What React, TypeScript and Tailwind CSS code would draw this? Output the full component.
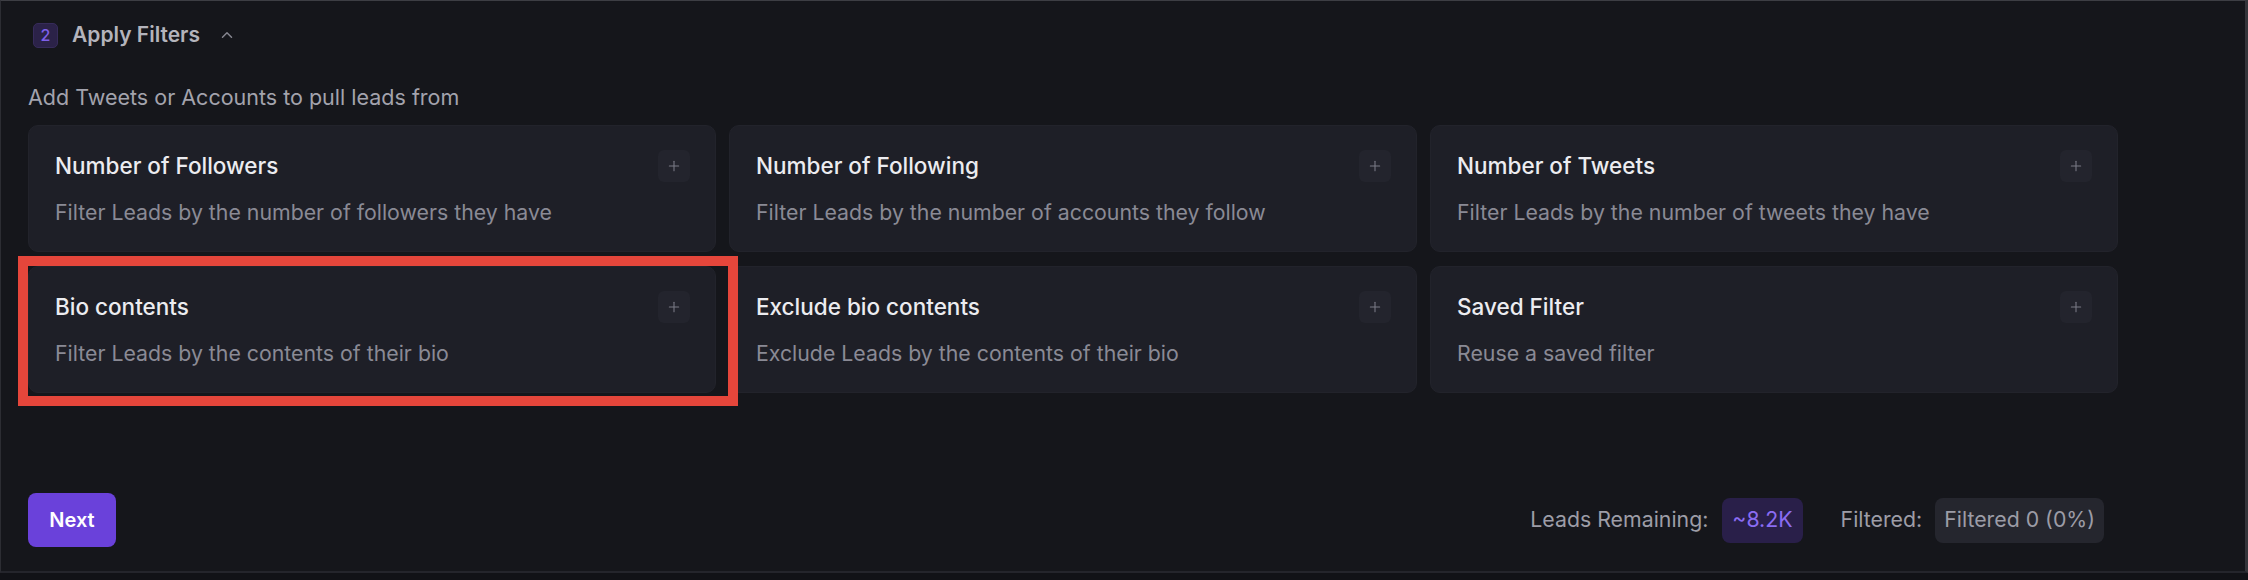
import { ChevronUp, Plus } from 'lucide-react';

const FILTERS = [
  { title: 'Number of Followers', desc: 'Filter Leads by the number of followers they have' },
  { title: 'Number of Following', desc: 'Filter Leads by the number of accounts they follow' },
  { title: 'Number of Tweets', desc: 'Filter Leads by the number of tweets they have' },
  { title: 'Bio contents', desc: 'Filter Leads by the contents of their bio' },
  { title: 'Exclude bio contents', desc: 'Exclude Leads by the contents of their bio' },
  { title: 'Saved Filter', desc: 'Reuse a saved filter' },
];

function FilterCard({ title, desc }: { title: string; desc: string }) {
  return (
    <div className="h-[127px] rounded-[10px] bg-[#1e1f27] border border-[#22232b] pl-[26px] pr-[25px] pt-[24px]">
      <div className="flex items-center justify-between">
        <h3 className="text-[22.5px] leading-[28px] font-medium text-[#ececf0]">{title}</h3>
        <button className="w-[32px] h-[32px] rounded-md bg-[#23242d] flex items-center justify-center text-[#7a7a86]">
          <Plus size={16} strokeWidth={1.6} />
        </button>
      </div>
      <p className="mt-[16px] text-[21.3px] leading-[28px] text-[#8a8a95]">{desc}</p>
    </div>
  );
}

export default function App() {
  return (
    <div className="w-[2248px] h-[580px] bg-[#111217] font-['Inter',sans-serif]">
      <div className="h-[573px] bg-[#15161b] border-t border-l border-r-[3px] border-b-2 border-t-[#3d3e44] border-l-[#2c2d33] border-r-[#34353b] border-b-[#24252c] flex flex-col">
        {/* header */}
        <div className="flex items-center gap-[14px] pl-[32px] pt-[20px]">
          <span className="w-[25px] h-[25px] rounded-[5px] bg-[#2b2248] border border-[#362b5a] flex items-center justify-center text-[16px] font-medium text-[#7f60ea]">
            2
          </span>
          <span className="text-[21px] leading-[28px] font-semibold text-[#b4b4bc]">Apply Filters</span>
          <ChevronUp size={18} strokeWidth={2} className="text-[#85858f] ml-[4px]" />
        </div>

        <p className="pl-[27px] mt-[34px] text-[21.5px] leading-[28px] text-[#a3a3ad]">
          Add Tweets or Accounts to pull leads from
        </p>

        <div className="relative ml-[27px] mt-[14px] w-[2090px] grid grid-cols-3 gap-x-[13px] gap-y-[14px]">
          {FILTERS.map((f) => (
            <FilterCard key={f.title} title={f.title} desc={f.desc} />
          ))}
          {/* highlight annotation */}
          <div className="absolute left-[-10px] top-[131px] w-[720px] h-[150px] border-[10px] border-[#e5463b] pointer-events-none" />
        </div>

        <div className="mt-[100px] ml-[27px] w-[2076px] flex items-center justify-between">
          <button className="w-[88px] h-[54px] rounded-lg bg-[#6a41da] text-white text-[20px] font-semibold">
            Next
          </button>
          <div className="flex items-center text-[21.3px]">
            <span className="text-[#9d9da7]">Leads Remaining:</span>
            <span className="ml-[14px] h-[45px] px-[10px] rounded-lg bg-[#291f49] text-[#8a6cf2] flex items-center">
              ~8.2K
            </span>
            <span className="ml-[38px] text-[#9d9da7]">Filtered:</span>
            <span className="ml-[13px] h-[45px] px-[9px] rounded-lg bg-[#25262e] text-[#9c9ca6] flex items-center">
              Filtered 0 (0%)
            </span>
          </div>
        </div>
      </div>
    </div>
  );
}
